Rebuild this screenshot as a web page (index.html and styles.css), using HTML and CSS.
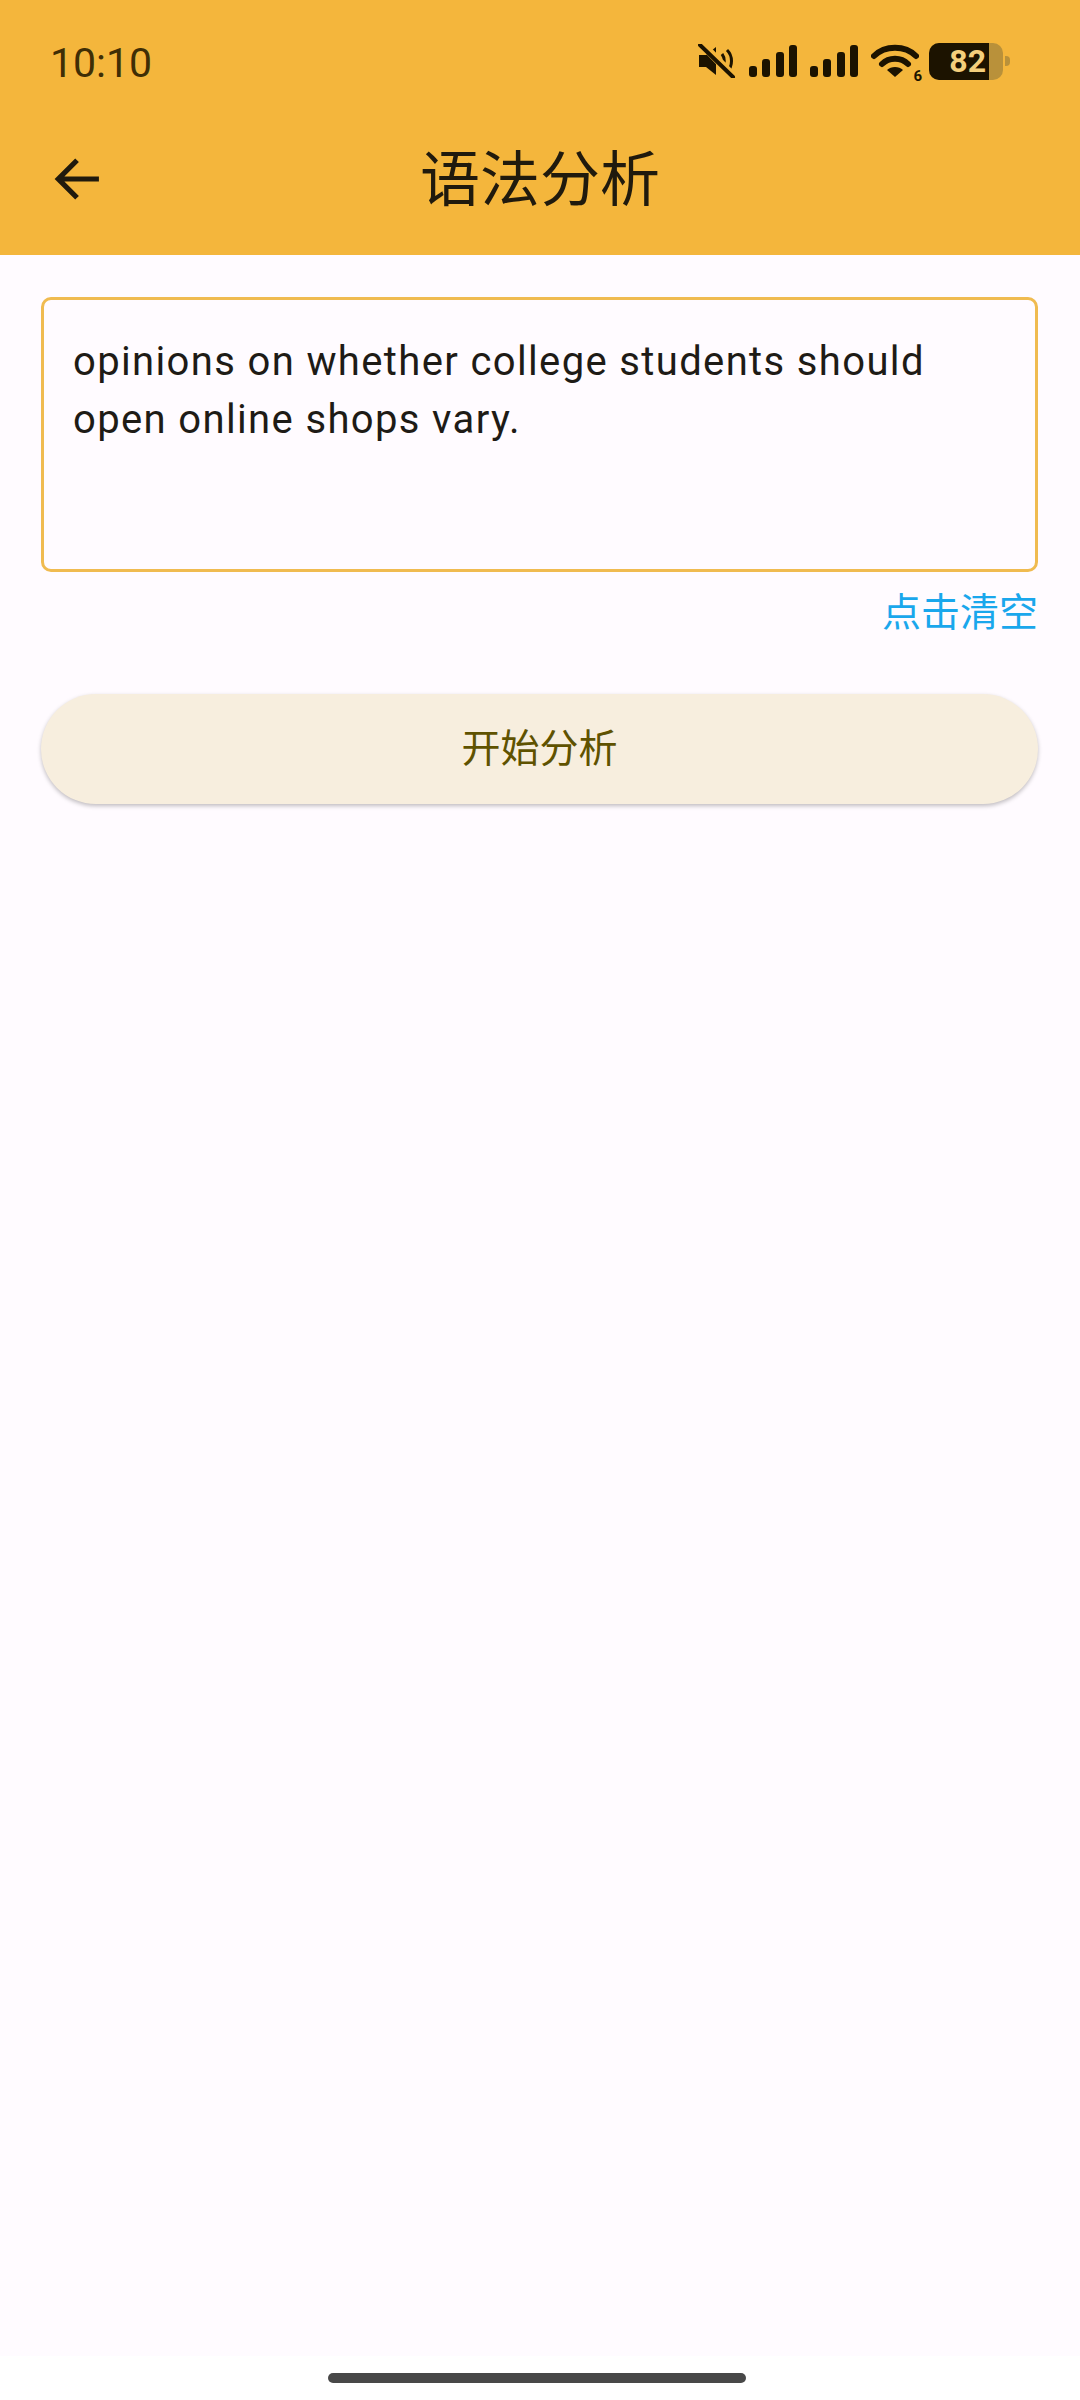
FILE: index.html
```html
<!DOCTYPE html>
<html lang="zh">
<head>
    <meta charset="utf-8">
    <title>语法分析</title>
    <link rel="stylesheet" href="styles.css">
</head>
<body>
<div class="screen">
    <header class="top">
        <div class="status">
            <span class="clock">10:10</span>
            <div class="status-icons">
                <svg class="ico-mute" viewBox="0 0 38 34" width="38" height="34">
                    <path d="M1 11h7l10-8v28l-10-8H1z" fill="#1c1300"/>
                    <path d="M24 10c3 4 3 10 0 14M29 6c6 6 6 16 0 22" fill="none" stroke="#1c1300" stroke-width="3"/>
                    <path d="M3 -1l34 35" stroke="#f4b63c" stroke-width="8"/>
                    <path d="M2 1l33 32" stroke="#1c1300" stroke-width="4" stroke-linecap="round"/>
                </svg>
                <svg class="ico-signal" viewBox="0 0 48 32" width="48" height="32">
                    <rect x="0" y="21" width="8" height="11" rx="3"/>
                    <rect x="13" y="14" width="8" height="18" rx="3"/>
                    <rect x="27" y="7" width="8" height="25" rx="3"/>
                    <rect x="40" y="0" width="8" height="32" rx="3"/>
                </svg>
                <svg class="ico-signal" viewBox="0 0 48 32" width="48" height="32">
                    <rect x="0" y="21" width="8" height="11" rx="3"/>
                    <rect x="13" y="14" width="8" height="18" rx="3"/>
                    <rect x="27" y="7" width="8" height="25" rx="3"/>
                    <rect x="40" y="0" width="8" height="32" rx="3"/>
                </svg>
                <div class="wifi">
                    <svg viewBox="0 0 48 34" width="48" height="34">
                        <path d="M3 12C14 1 34 1 45 12" fill="none" stroke="#1c1300" stroke-width="6" stroke-linecap="round"/>
                        <path d="M11 20c7-7 19-7 26 0" fill="none" stroke="#1c1300" stroke-width="6" stroke-linecap="round"/>
                        <path d="M16 26c4-4 12-4 16 0l-8 7z" fill="#1c1300"/>
                    </svg>
                    <span class="wifi-num">6</span>
                </div>
                <div class="battery">
                    <div class="battery-body">
                        <div class="battery-level"><span>82</span></div>
                    </div>
                    <div class="battery-cap"></div>
                </div>
            </div>
        </div>
        <div class="appbar">
            <svg class="back" viewBox="0 0 48 48" width="50" height="50">
                <path d="M46 24H7M25 6L7 24l18 18" fill="none" stroke="#201a0d" stroke-width="5"/>
            </svg>
            <h1>语法分析</h1>
        </div>
    </header>
    <main class="content">
        <div class="input-box">opinions on whether college students should open online shops vary.</div>
        <div class="clear-row"><a class="clear">点击清空</a></div>
        <button class="start">开始分析</button>
    </main>
    <div class="nav-area"><div class="pill"></div></div>
</div>
</body>
</html>
```

FILE: styles.css
```css
* {
    box-sizing: border-box;
}

body {
    margin: 0;
    background: #fffbff;
    font-family: Roboto, "Noto Sans CJK SC", sans-serif;
}

.screen {
    width: 1080px;
    height: 2400px;
    display: flex;
    flex-direction: column;
}

.top {
    height: 255px;
    background: #f4b63c;
}

.status {
    height: 122px;
    padding: 0 70px 0 50px;
    display: flex;
    align-items: center;
    justify-content: space-between;
}

.clock {
    font-size: 41px;
    color: #3f2e05;
    padding-top: 3px;
}

.status-icons {
    display: flex;
    align-items: center;
    gap: 13px;
}

.ico-signal rect {
    fill: #1c1300;
}

.wifi {
    position: relative;
    display: flex;
    margin-right: -3px;
}

.wifi-num {
    position: absolute;
    right: -3px;
    bottom: -7px;
    font-size: 15px;
    font-weight: 700;
    color: #1c1300;
}

.battery {
    display: flex;
    align-items: center;
    gap: 2px;
}

.battery-body {
    width: 74px;
    height: 37px;
    border-radius: 10px;
    background: #b9913a;
    overflow: hidden;
}

.battery-level {
    width: 60px;
    height: 37px;
    background: #1c1300;
    display: flex;
    align-items: center;
    justify-content: flex-end;
    padding-right: 3px;
}

.battery-level span {
    font-size: 32px;
    font-weight: 700;
    color: #f4cf7c;
    line-height: 37px;
}

.battery-cap {
    width: 5px;
    height: 10px;
    background: #b9913a;
    border-radius: 0 4px 4px 0;
}

.appbar {
    position: relative;
    height: 108px;
    padding-left: 51px;
    display: flex;
    align-items: center;
}

.back {
    margin-top: 5px;
}

.appbar h1 {
    position: absolute;
    left: 0;
    right: 0;
    margin: 0;
    padding-bottom: 3px;
    text-align: center;
    font-size: 60px;
    font-weight: 400;
    color: #201a0d;
}

.content {
    flex: 1;
    padding: 42px 42px 0 41px;
}

.input-box {
    height: 275px;
    padding: 33px 29px 0;
    border: 3px solid #f0bb50;
    border-radius: 10px;
    font-size: 40px;
    line-height: 58px;
    letter-spacing: 1.36px;
    color: #1e1b16;
}

.clear-row {
    display: flex;
    justify-content: flex-end;
    margin-top: 16px;
}

.clear {
    font-size: 39px;
    line-height: 50px;
    color: #1aa7ec;
}

.start {
    display: block;
    width: 100%;
    height: 110px;
    margin-top: 56px;
    padding: 0 0 8px;
    border: none;
    border-radius: 55px;
    background: #f7eede;
    color: #5f5200;
    font-family: inherit;
    font-size: 39px;
    box-shadow: 0 2px 4px rgba(0, 0, 0, 0.25);
}

.nav-area {
    height: 44px;
    background: #fff;
    display: flex;
    justify-content: center;
    padding-top: 17px;
}

.pill {
    width: 418px;
    height: 10px;
    border-radius: 5px;
    background: #484848;
    margin-left: -6px;
}
```
